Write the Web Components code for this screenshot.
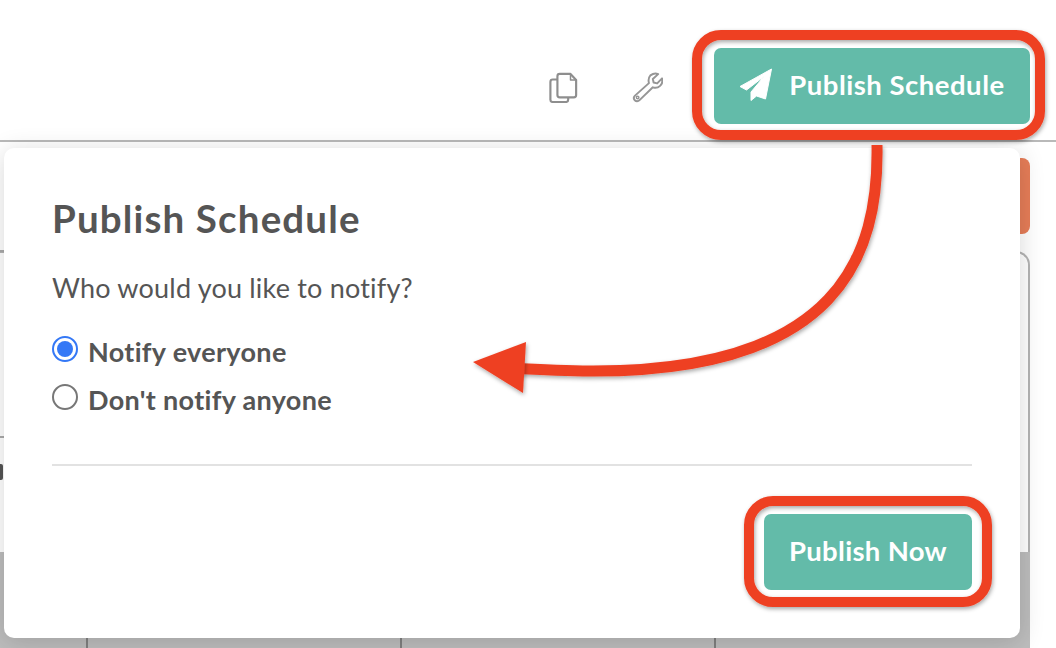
<!DOCTYPE html>
<html><head><meta charset="utf-8"><style>
html,body{margin:0;padding:0;width:1056px;height:648px;overflow:hidden;background:#fff}
body{font-family:"Lato","Noto Sans",sans-serif;color:#555}
</style></head><body>
<app-stage></app-stage>
<script>
function def(name,css,html){
  customElements.define(name,class extends HTMLElement{
    constructor(){super();this.attachShadow({mode:'open'}).innerHTML='<style>'+css+'</style>'+html;}
  });
}
def('teal-button',`:host{display:flex;flex:none;box-sizing:border-box;align-items:center;justify-content:center;gap:var(--gap,16px);background:#63bba9;color:#fff;border-radius:7px;font:700 27.5px/1 "Lato",sans-serif;letter-spacing:var(--ls,.5px);width:var(--w);height:var(--h);padding-bottom:2px}`,`<slot name="icon"></slot><slot></slot>`);
def('radio-option',`:host{display:flex;align-items:center;gap:10px;font:700 27px/48px "Lato",sans-serif;letter-spacing:.33px;color:#555;height:48px}
.r{width:26px;height:26px;box-sizing:border-box;border-radius:50%;border:2px solid #777;background:#fff;position:relative;top:-3px;flex:none}
:host([checked]) .r{border-color:#3478f6}
:host([checked]) .r::after{content:"";position:absolute;inset:3px;border-radius:50%;background:#3478f6}`,`<span class="r"></span><span><slot></slot></span>`);
def('top-bar',`:host{display:flex;box-sizing:border-box;height:142px;border-bottom:2px solid #b9b9b9;background:#fff;align-items:flex-start;justify-content:flex-end;padding:48px 26px 0 0}
.icons{display:flex;align-items:center;gap:54px;margin-right:51px;padding-top:24px}
.i{display:block;flex:none}`,`<div class="icons">
<svg class="i" width="29" height="31" viewBox="0 0 31 33" fill="none" stroke="#8e8e8e" stroke-width="2.3" stroke-linejoin="round"><path d="M9 8H4a2.500 2.500 0 0 0-2.500 2.500v19A2.500 2.500 0 0 0 4 32h14a2.500 2.500 0 0 0 2.500-2.500V27"/><path d="M11.500 2H23l6 6.500V24.500a2.500 2.500 0 0 1-2.500 2.500h-15A2.500 2.500 0 0 1 9 24.500v-20A2.500 2.500 0 0 1 11.500 2z"/><path d="M23 2v6.500h6" stroke-width="1.600"/></svg>
<svg class="i" width="31" height="31" viewBox="0 0 32 32" fill="none" stroke="#969696" stroke-width="2" stroke-linejoin="round"><path d="M19 3.500c3-2.200 6-2.200 8-1.300l-5.500 5 .8 3.600 3.700 1 5-5.200c.8 2.800 0 5.800-2 7.700-2.200 2-5 2.400-7.500 1.500L7.800 29c-1.500 1.500-3.600 1.500-4.900.2-1.300-1.400-1.200-3.400.2-4.800L17.500 11.500c-.8-3-.3-6 1.500-8z"/><circle cx="5.800" cy="26.300" r="1.300" stroke-width="1.500"/></svg>
</div><slot></slot>`);
def('schedule-backdrop',`:host{display:block;position:absolute;inset:142px 0 0 0;overflow:hidden;background:#fff}
.orange{position:absolute;left:1000px;top:16px;width:30px;height:76px;background:#e67d58;border-radius:0 8px 8px 0}
.table{position:absolute;left:0;right:26px;top:109px;height:301px;border:2px solid #b4b4b4;border-left:0;border-bottom:0;border-radius:0 14px 0 0;background:#fff}
.shade{position:absolute;left:0;right:26px;top:410px;bottom:0;background:#bdbdbd}
.rule{position:absolute;left:0;width:4px;height:2px;background:#aaa}
.col{position:absolute;top:495px;bottom:0;width:2px;background:#808080}
.u{position:absolute;left:0;top:322px;width:3px;height:16px;background:#555;border-radius:0 2px 2px 0}`,`
<div class="orange"></div><div class="table"></div><div class="shade"></div>
<div class="rule" style="top:108px"></div><div class="rule" style="top:294px"></div><div class="u"></div>
<div class="col" style="left:86px"></div><div class="col" style="left:400px"></div><div class="col" style="left:714px"></div>`);
def('publish-card',`:host{display:flex;flex-direction:column;box-sizing:border-box;position:absolute;left:4px;top:148px;width:1016px;height:490px;background:#fff;border-radius:10px;padding:48px 48px 0 48px;box-shadow:0 4px 26px rgba(0,0,0,.16)}
h2{margin:0;font:700 38.500px/44px "Lato",sans-serif;letter-spacing:1.150px;color:#555}
p{margin:30px 0 22px;font:400 27px/36px "Lato",sans-serif;letter-spacing:.2px;color:#555}
hr{border:0;height:2px;background:#e2e2e2;margin:40px 0 48px;width:100%;flex:none}
.foot{display:flex;justify-content:flex-end}`,`<h2><slot name="title"></slot></h2><p><slot name="prompt"></slot></p><slot name="options"></slot><hr><div class="foot"><slot name="action"></slot></div>`);
def('app-stage',`:host{display:block;position:relative;width:1056px;height:648px;overflow:hidden}
top-bar{position:relative;z-index:1}
svg.notes{position:absolute;left:0;top:0;overflow:visible;pointer-events:none;z-index:3}
publish-card{z-index:2}`,`
<schedule-backdrop></schedule-backdrop>
<top-bar><teal-button style="--w:316px;--h:76px">
  <svg slot="icon" width="34" height="34" viewBox="0 0 34 34"><path fill="#fff" stroke="#fff" stroke-width="1" stroke-linejoin="round" d="M32.500 1 L1 18.500 L7.500 22 L25 8.500 L12 24 L12 32.500 L17.500 28 L26.500 31 Z"/></svg>
  Publish Schedule</teal-button></top-bar>
<publish-card>
  <span slot="title">Publish Schedule</span>
  <span slot="prompt">Who would you like to notify?</span>
  <div slot="options"><radio-option checked>Notify everyone</radio-option><radio-option>Don't notify anyone</radio-option></div>
  <teal-button slot="action" style="--w:208px;--h:76px;--ls:.3px">Publish Now</teal-button>
</publish-card>
<svg class="notes" width="1056" height="648" viewBox="0 0 1056 648">
  <defs><filter id="s" x="-10%" y="-10%" width="120%" height="120%"><feDropShadow dx="1" dy="2" stdDeviation="2" flood-color="#000" flood-opacity=".35"/></filter></defs>
  <g fill="none" stroke="#ee4024" stroke-width="10" filter="url(#s)">
    <rect x="697" y="35" width="343" height="100" rx="24"/>
    <rect x="749" y="501" width="238" height="101" rx="24"/>
    <path stroke-width="11" d="M877 145 C879 255 840 372 590 371 C565 371 545 370 510 368"/>
  </g>
  <path fill="#ee4024" filter="url(#s)" d="M473 362 L526 342 L523 393 Z"/>
</svg>`);
</script></body></html>
